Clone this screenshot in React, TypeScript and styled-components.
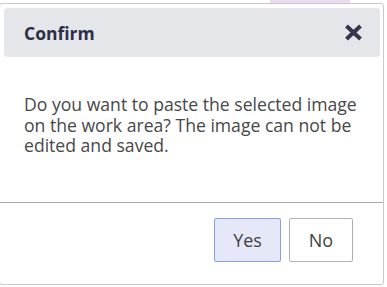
import styled, { createGlobalStyle } from "styled-components";

const GlobalStyle = createGlobalStyle`
  html, body {
    margin: 0;
    padding: 0;
    background: #ffffff;
    overflow: hidden;
  }
  * {
    box-sizing: border-box;
  }
`;

const Page = styled.div`
  width: 387px;
  height: 287px;
  padding-top: 3px;
  font-family: "Open Sans", "Noto Sans", sans-serif;
  position: relative;
`;

const Backdrop = styled.div`
  position: absolute;
  top: -8px;
  left: 270px;
  display: flex;
  gap: 20px;
  align-items: center;
  opacity: 0.5;
`;

const BackdropChip = styled.div`
  width: 80px;
  height: 12px;
  background: #d7b6e6;
`;

const Dialog = styled.div`
  position: relative;
  margin-left: -1px;
  width: 385px;
  height: 282px;
  background: #ffffff;
  border: 1px solid #c9c9c9;
  border-radius: 3px;
  display: flex;
  flex-direction: column;
`;

const Header = styled.div`
  margin: 4px 3px 0 4px;
  height: 49px;
  background: #e4e6ea;
  border-radius: 4px;
  display: flex;
  align-items: center;
  justify-content: space-between;
  padding: 0 17px 0 20px;
`;

const Title = styled.h2`
  margin: 0;
  font-size: 17.5px;
  font-weight: 700;
  color: #2e2f47;
`;

const CloseButton = styled.button`
  border: none;
  background: transparent;
  padding: 0;
  width: 20px;
  height: 20px;
  display: flex;
  align-items: center;
  justify-content: center;
  cursor: pointer;
`;

const Body = styled.div`
  flex: 1;
  padding: 37px 16px 0 24px;
  border-bottom: 1px solid #a9a9a9;
`;

const Message = styled.p`
  margin: 0;
  font-size: 17.6px;
  line-height: 20.5px;
  color: #474747;
`;

const Footer = styled.div`
  height: 81px;
  display: flex;
  justify-content: flex-end;
  align-items: flex-start;
  gap: 8px;
  padding: 15px 30px 0 0;
`;

const Button = styled.button<{ $primary?: boolean }>`
  height: 44px;
  min-width: ${(p) => (p.$primary ? "67px" : "64px")};
  font-family: inherit;
  font-size: 18px;
  color: #3f3f3f;
  background: ${(p) => (p.$primary ? "#e6e8fa" : "#ffffff")};
  border: 1px solid ${(p) => (p.$primary ? "#86a2da" : "#b0b0b0")};
  border-radius: 2px;
  cursor: pointer;
`;

const CloseIcon = () => (
  <svg width="19" height="17" viewBox="0 0 19 17">
    <path
      d="M2.5 2 L16.5 15 M16.5 2 L2.5 15"
      stroke="#34354f"
      strokeWidth="4"
      strokeLinecap="butt"
    />
  </svg>
);

export default function App() {
  return (
    <>
      <GlobalStyle />
      <Page>
        <Backdrop>
          <BackdropChip />
        </Backdrop>
        <Dialog>
          <Header>
            <Title>Confirm</Title>
            <CloseButton aria-label="Close">
              <CloseIcon />
            </CloseButton>
          </Header>
          <Body>
            <Message>
              Do you want to paste the selected image on the work area? The
              image can not be edited and saved.
            </Message>
          </Body>
          <Footer>
            <Button $primary>Yes</Button>
            <Button>No</Button>
          </Footer>
        </Dialog>
      </Page>
    </>
  );
}
